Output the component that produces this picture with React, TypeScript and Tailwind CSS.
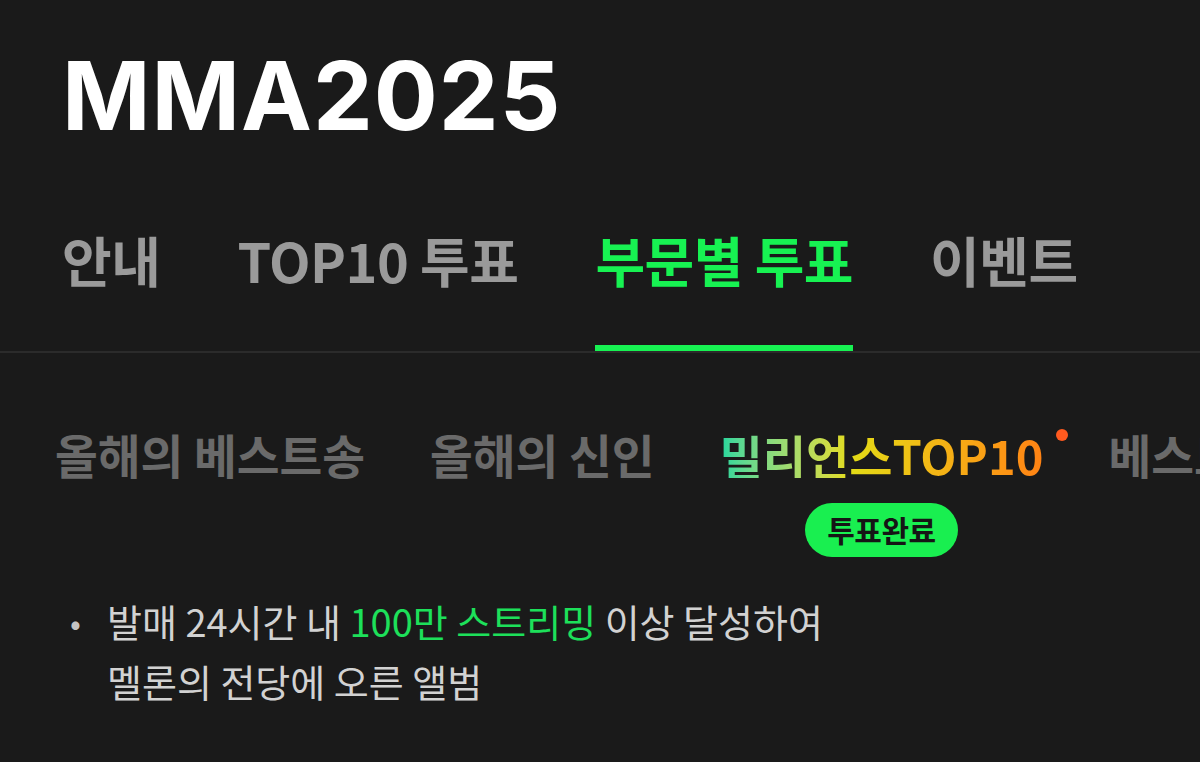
const TABS = ["안내", "TOP10 투표", "부문별 투표", "이벤트"];
const ACTIVE_TAB = 2;

const kr = "font-['Noto_Sans_CJK_KR','Noto_Sans',sans-serif]";

function TopTab({ label, active }: { label: string; active: boolean }) {
  return (
    <div className="flex flex-col items-stretch">
      <span
        className={`text-[54px] leading-[1] font-bold tracking-[-0.5px] whitespace-nowrap ${
          active ? "text-[#17f252]" : "text-[#9a9a9a]"
        }`}
      >
        {label}
      </span>
      <div className={`mt-[58px] h-[6px] ${active ? "bg-[#17f252]" : "bg-transparent"}`} />
    </div>
  );
}

function MillionsTab() {
  return (
    <div className="relative flex flex-col items-center">
      <span className="text-[47px] leading-[1] font-bold whitespace-nowrap bg-gradient-to-r from-[#0fd69e] via-[#e2dc16] via-40% to-[#ff8214] bg-clip-text text-transparent">
        밀리언스TOP10
      </span>
      <span className="absolute -right-[25px] top-[-2px] w-[12px] h-[12px] rounded-full bg-[#ff5a1f]" />
      <span className="mt-[25px] rounded-full bg-[#19ef50] px-[22px] pt-[11px] pb-[13px] text-[30px] leading-[1] font-bold tracking-[-0.5px] text-[#151515]">
        투표완료
      </span>
    </div>
  );
}

export default function App() {
  return (
    <div className={`w-[1200px] h-[762px] bg-[#1a1a1a] overflow-hidden ${kr}`}>
      <h1 className="pl-[62px] pt-[44px] text-[95px] leading-[1.1] font-bold text-white font-['Inter',sans-serif] tracking-[1px]">
        MMA2025
      </h1>

      <nav className="mt-[84px] flex gap-[77px] px-[62px] border-b-2 border-[#2b2b2b]">
        {TABS.map((t, i) => (
          <TopTab key={t} label={t} active={i === ACTIVE_TAB} />
        ))}
      </nav>

      <div className="mt-[78px] flex items-start gap-[65px] pl-[55px] whitespace-nowrap text-[46.5px] leading-[1] font-bold text-[#6a6a6a]">
        <span>올해의 베스트송</span>
        <span>올해의 신인</span>
        <MillionsTab />
        <span>베스트앨범</span>
      </div>

      <ul className="mt-[34px] pl-[70px] pr-[40px] text-[38px] leading-[60px] text-[#d2d2d2]">
        <li className="flex">
          <span className="w-[37px] shrink-0 text-[32px] text-[#c4c4c4]">•</span>
          <p>
            발매 24시간 내 <span className="text-[#1de05a]">100만 스트리밍</span> 이상 달성하여
            <br />
            멜론의 전당에 오른 앨범
          </p>
        </li>
      </ul>
    </div>
  );
}
